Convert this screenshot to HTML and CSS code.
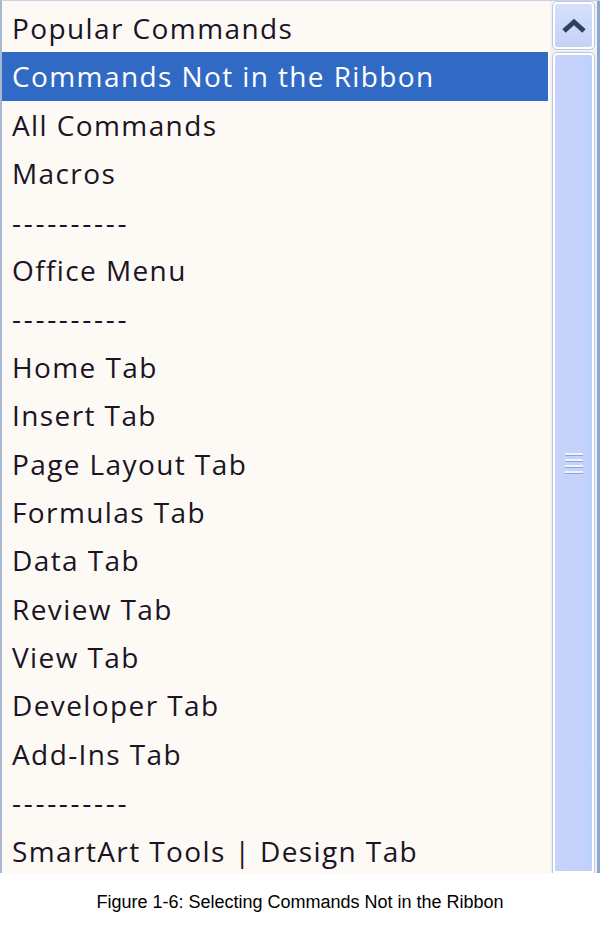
FILE: index.html
```html
<!DOCTYPE html>
<html>
<head>
<meta charset="utf-8">
<link rel="stylesheet" href="styles.css">
</head>
<body>
<div class="frame">
  <div class="listbox">
    <ul class="items">
      <li class="item">Popular Commands</li>
      <li class="item selected">Commands Not in the Ribbon</li>
      <li class="item">All Commands</li>
      <li class="item">Macros</li>
      <li class="item sep">----------</li>
      <li class="item">Office Menu</li>
      <li class="item sep">----------</li>
      <li class="item">Home Tab</li>
      <li class="item">Insert Tab</li>
      <li class="item">Page Layout Tab</li>
      <li class="item">Formulas Tab</li>
      <li class="item">Data Tab</li>
      <li class="item">Review Tab</li>
      <li class="item">View Tab</li>
      <li class="item">Developer Tab</li>
      <li class="item">Add-Ins Tab</li>
      <li class="item sep">----------</li>
      <li class="item">SmartArt Tools | Design Tab</li>
    </ul>
    <div class="scrollbar">
      <div class="btn-up">
        <svg width="26" height="16" viewBox="0 0 26 16"><path d="M3 13 L13 4 L23 13" fill="none" stroke="#2e4060" stroke-width="5" stroke-linejoin="miter"/></svg>
      </div>
      <div class="thumb">
        <div class="grip"><span></span><span></span><span></span><span></span></div>
      </div>
    </div>
  </div>
  <p class="caption">Figure 1-6: Selecting Commands Not in the Ribbon</p>
</div>
</body>
</html>
```
FILE: styles.css
```css
html, body {
  margin: 0;
  padding: 0;
  background: #ffffff;
}
.frame {
  width: 600px;
  height: 925px;
  display: flex;
  flex-direction: column;
}
.listbox {
  height: 873px;
  display: flex;
  background: #fdfaf5;
  border-left: 2px solid #a9b8d2;
  border-top: 1px solid #c8d2e2;
  box-sizing: border-box;
  overflow: hidden;
}
.items {
  list-style: none;
  margin: 0;
  padding: 3px 2px 0 0;
  flex: 1;
}
.item {
  height: 48.4px;
  line-height: 48px;
  padding-left: 10px;
  font-family: "Open Sans", "DejaVu Sans", sans-serif;
  font-size: 28px;
  letter-spacing: 1.4px;
  color: #1a1424;
  white-space: nowrap;
}
.item.sep {
  letter-spacing: 2.7px;
}
.item.selected {
  background: #316ac5;
  color: #ffffff;
}
.scrollbar {
  width: 50px;
  box-sizing: border-box;
  display: flex;
  flex-direction: column;
  gap: 4px;
  padding: 1px 3px 0 3px;
  background: #f3f1ec;
  border-right: 3px solid #8ea5cf;
}
.btn-up {
  height: 43px;
  border: 2px solid #ffffff;
  outline: 1px solid #b9c8ea;
  border-radius: 4px;
  background: linear-gradient(#d6e0fb, #c4d2f7);
  display: flex;
  align-items: center;
  justify-content: center;
}
.thumb {
  flex: 1;
  border: 2px solid #ffffff;
  outline: 1px solid #b9c8ea;
  border-radius: 4px 4px 0 0;
  background: linear-gradient(90deg, #c6d3fb 0%, #c3d1fb 70%, #bcd0fa 100%);
  display: flex;
  align-items: center;
  justify-content: center;
}
.grip {
  display: flex;
  flex-direction: column;
  gap: 3px;
}
.grip span {
  display: block;
  width: 18px;
  height: 2px;
  background: #eef3ff;
  border-bottom: 1px solid #8fa6d8;
}
.caption {
  margin: 0;
  padding-top: 19px;
  text-align: center;
  font-family: "Liberation Sans", Arial, sans-serif;
  font-size: 18px;
  color: #000000;
}
```
